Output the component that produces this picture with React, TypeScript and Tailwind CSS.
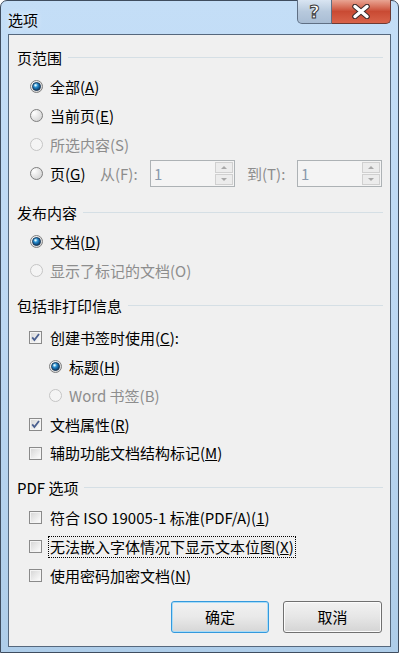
import React from "react";

const FONT = "font-['Microsoft_YaHei','Noto_Sans_CJK_SC',sans-serif]";

function RadioDot({ checked, disabled }: { checked?: boolean; disabled?: boolean }) {
    return (
        <svg width="13" height="13" viewBox="0 0 13 13" className="shrink-0">
            <defs>
                <radialGradient id="rbg" cx="0.3" cy="0.3" r="0.85">
                    <stop offset="0" stopColor="#ffffff" />
                    <stop offset="1" stopColor="#cfcfcf" />
                </radialGradient>
                <radialGradient id="rdot" cx="0.4" cy="0.35" r="0.7">
                    <stop offset="0" stopColor="#9be6ff" />
                    <stop offset="0.45" stopColor="#1e7fc2" />
                    <stop offset="1" stopColor="#0a3158" />
                </radialGradient>
            </defs>
            <circle
                cx="6.5"
                cy="6.5"
                r="6"
                fill={disabled ? "#f4f4f4" : "url(#rbg)"}
                stroke={disabled ? "#c4c4c4" : "#7f7f7f"}
                strokeWidth="1"
            />
            {checked && (
                <>
                    <circle cx="6.5" cy="6.5" r="4" fill="url(#rdot)" stroke="#1a3554" strokeWidth="0.9" />
                    <circle cx="5.5" cy="5.3" r="1.1" fill="#ffffff" opacity="0.75" />
                </>
            )}
        </svg>
    );
}

function CheckBox({ checked }: { checked?: boolean }) {
    return (
        <svg width="13" height="13" viewBox="0 0 13 13" className="shrink-0">
            <defs>
                <linearGradient id="cbg" x1="0" y1="0" x2="1" y2="1">
                    <stop offset="0" stopColor="#d8d8d8" />
                    <stop offset="1" stopColor="#fbfbfb" />
                </linearGradient>
            </defs>
            <rect x="0.5" y="0.5" width="12" height="12" fill="#f4f4f4" stroke="#8a8a8a" />
            <rect x="2" y="2" width="9" height="9" fill="url(#cbg)" />
            {checked && (
                <path d="M3.2 6.4 L5.4 9 L10 3" fill="none" stroke="#4a5f8f" strokeWidth="1.8" />
            )}
        </svg>
    );
}

function Header({ children }: { children: React.ReactNode }) {
    return (
        <div className="flex h-[29px] items-center gap-[6px]">
            <span className="text-black">{children}</span>
            <div className="h-px flex-1 bg-[#d5dfe5]" />
        </div>
    );
}

function Row({
    indent = "ml-[13px]",
    kind,
    checked,
    disabled,
    children,
    className = "",
    h = "h-[29px]",
}: {
    indent?: string;
    kind: "radio" | "check";
    checked?: boolean;
    disabled?: boolean;
    children: React.ReactNode;
    className?: string;
    h?: string;
}) {
    return (
        <div className={`flex items-center ${h} ${indent} ${className}`}>
            {kind === "radio" ? (
                <div className="flex items-center gap-[7px]">
                    <RadioDot checked={checked} disabled={disabled} />
                    <span className={disabled ? "text-[#8d8d8d]" : "text-black"}>{children}</span>
                </div>
            ) : (
                <div className="flex items-center gap-[8px]">
                    <CheckBox checked={checked} />
                    <span className="text-black">{children}</span>
                </div>
            )}
        </div>
    );
}

function Spin() {
    return (
        <div className="flex h-[27px] w-[85px] border border-[#adb2b5] bg-[#f4f4f4]">
            <div className="flex flex-1 items-center pl-[3px] text-[#8a9aae]">1</div>
            <div className="m-px flex w-[18px] flex-col gap-px">
                <div className="flex flex-1 items-center justify-center border border-[#d0d0d0] bg-[#ececec]">
                    <div className="h-0 w-0 border-x-[3.5px] border-b-[3.5px] border-x-transparent border-b-[#a8a8a8]" />
                </div>
                <div className="flex flex-1 items-center justify-center border border-[#d0d0d0] bg-[#ececec]">
                    <div className="h-0 w-0 border-x-[3.5px] border-t-[3.5px] border-x-transparent border-t-[#a8a8a8]" />
                </div>
            </div>
        </div>
    );
}

export default function App() {
    return (
        <div
            className={`${FONT} flex h-[653px] w-[399px] flex-col rounded-t-[7px] border border-[#3f4d5f] bg-gradient-to-b from-[#c4def7] via-[#bcd7f2] to-[#aecde9] text-[15px] leading-[20px]`}
        >
            {/* title bar */}
            <div className="flex h-[33px] items-start justify-between pl-[7px] pr-[7px]">
                <span className="mt-[9px] text-black [text-shadow:0_0_6px_#ffffff]">选项</span>
                <div className="-mt-px flex">
                    <div className="flex h-[24px] w-[35px] items-center justify-center rounded-bl-[5px] border border-t-0 border-[#5f6f84] bg-gradient-to-b from-[#d9e5f2] via-[#b7c9dd] to-[#a9bdd4]">
                        <span className="font-['DejaVu_Sans',sans-serif] text-[18px] font-bold leading-none text-white [-webkit-text-stroke:1px_#3a3a3a]">
                            ?
                        </span>
                    </div>
                    <div className="flex h-[24px] w-[59px] items-center justify-center rounded-br-[5px] border border-l-0 border-t-0 border-[#6e3a33] bg-gradient-to-b from-[#e8a493] via-[#c94a33] to-[#d9634a]">
                        <svg width="22" height="15" viewBox="0 0 22 15">
                            <path
                                d="M5 2.5 L17 12.5 M17 2.5 L5 12.5"
                                stroke="#3b2a2a"
                                strokeWidth="5.5"
                                strokeLinecap="round"
                            />
                            <path
                                d="M5 2.5 L17 12.5 M17 2.5 L5 12.5"
                                stroke="#ffffff"
                                strokeWidth="3.5"
                                strokeLinecap="round"
                            />
                        </svg>
                    </div>
                </div>
            </div>

            {/* client area */}
            <div className="mx-[7px] flex h-[613px] flex-col border border-[#56687d] bg-[#f0f0f0] pl-[8px] pr-[7px] pt-[8px]">
                <Header>页范围</Header>
                <Row kind="radio" checked>
                    全部(<u>A</u>)
                </Row>
                <Row kind="radio">
                    当前页(<u>E</u>)
                </Row>
                <Row kind="radio" disabled>
                    所选内容(S)
                </Row>
                <div className="ml-[13px] flex h-[29px] items-center">
                    <div className="flex w-[70px] items-center gap-[7px]">
                        <RadioDot />
                        <span className="text-black">
                            页(<u>G</u>)
                        </span>
                    </div>
                    <span className="w-[50px] text-[#8d8d8d]">从(F):</span>
                    <Spin />
                    <span className="ml-[12px] w-[50px] text-[#8d8d8d]">到(T):</span>
                    <Spin />
                </div>

                <div className="mt-[10px]">
                    <Header>发布内容</Header>
                </div>
                <Row kind="radio" checked>
                    文档(<u>D</u>)
                </Row>
                <Row kind="radio" disabled>
                    显示了标记的文档(O)
                </Row>

                <div className="mt-[6px]">
                    <Header>包括非打印信息</Header>
                </div>
                <Row kind="check" checked indent="ml-[12px]" className="mt-[3px]">
                    创建书签时使用(<u>C</u>):
                </Row>
                <Row kind="radio" checked indent="ml-[32px]">
                    标题(<u>H</u>)
                </Row>
                <Row kind="radio" disabled indent="ml-[32px]">
                    Word 书签(B)
                </Row>
                <Row kind="check" checked indent="ml-[12px]">
                    文档属性(<u>R</u>)
                </Row>
                <Row kind="check" indent="ml-[12px]" h="h-[28px]">
                    辅助功能文档结构标记(<u>M</u>)
                </Row>

                <div className="mt-[6px]">
                    <Header>PDF 选项</Header>
                </div>
                <Row kind="check" indent="ml-[12px]" className="mt-[1px]">
                    符合 ISO 19005-1 标准(PDF/A)(<u>1</u>)
                </Row>
                <div className="ml-[12px] flex h-[29px] items-center gap-[6px]">
                    <CheckBox />
                    <span className="border border-dotted border-black px-px leading-[20px] text-black">
                        无法嵌入字体情况下显示文本位图(<u>X</u>)
                    </span>
                </div>
                <Row kind="check" indent="ml-[12px]">
                    使用密码加密文档(<u>N</u>)
                </Row>

                <div className="mr-px mt-[11px] flex justify-end gap-[14px]">
                    <button className="h-[32px] w-[98px] rounded-[3px] border border-[#3399dd] bg-gradient-to-b from-[#f2f2f2] via-[#e9e9e9] to-[#d6d6d6] text-black shadow-[inset_0_0_0_1px_#a9dcf7]">
                        确定
                    </button>
                    <button className="h-[32px] w-[99px] rounded-[3px] border border-[#707070] bg-gradient-to-b from-[#f2f2f2] via-[#e6e6e6] to-[#d4d4d4] text-black shadow-[inset_0_0_0_1px_#fbfbfb]">
                        取消
                    </button>
                </div>
            </div>
        </div>
    );
}
